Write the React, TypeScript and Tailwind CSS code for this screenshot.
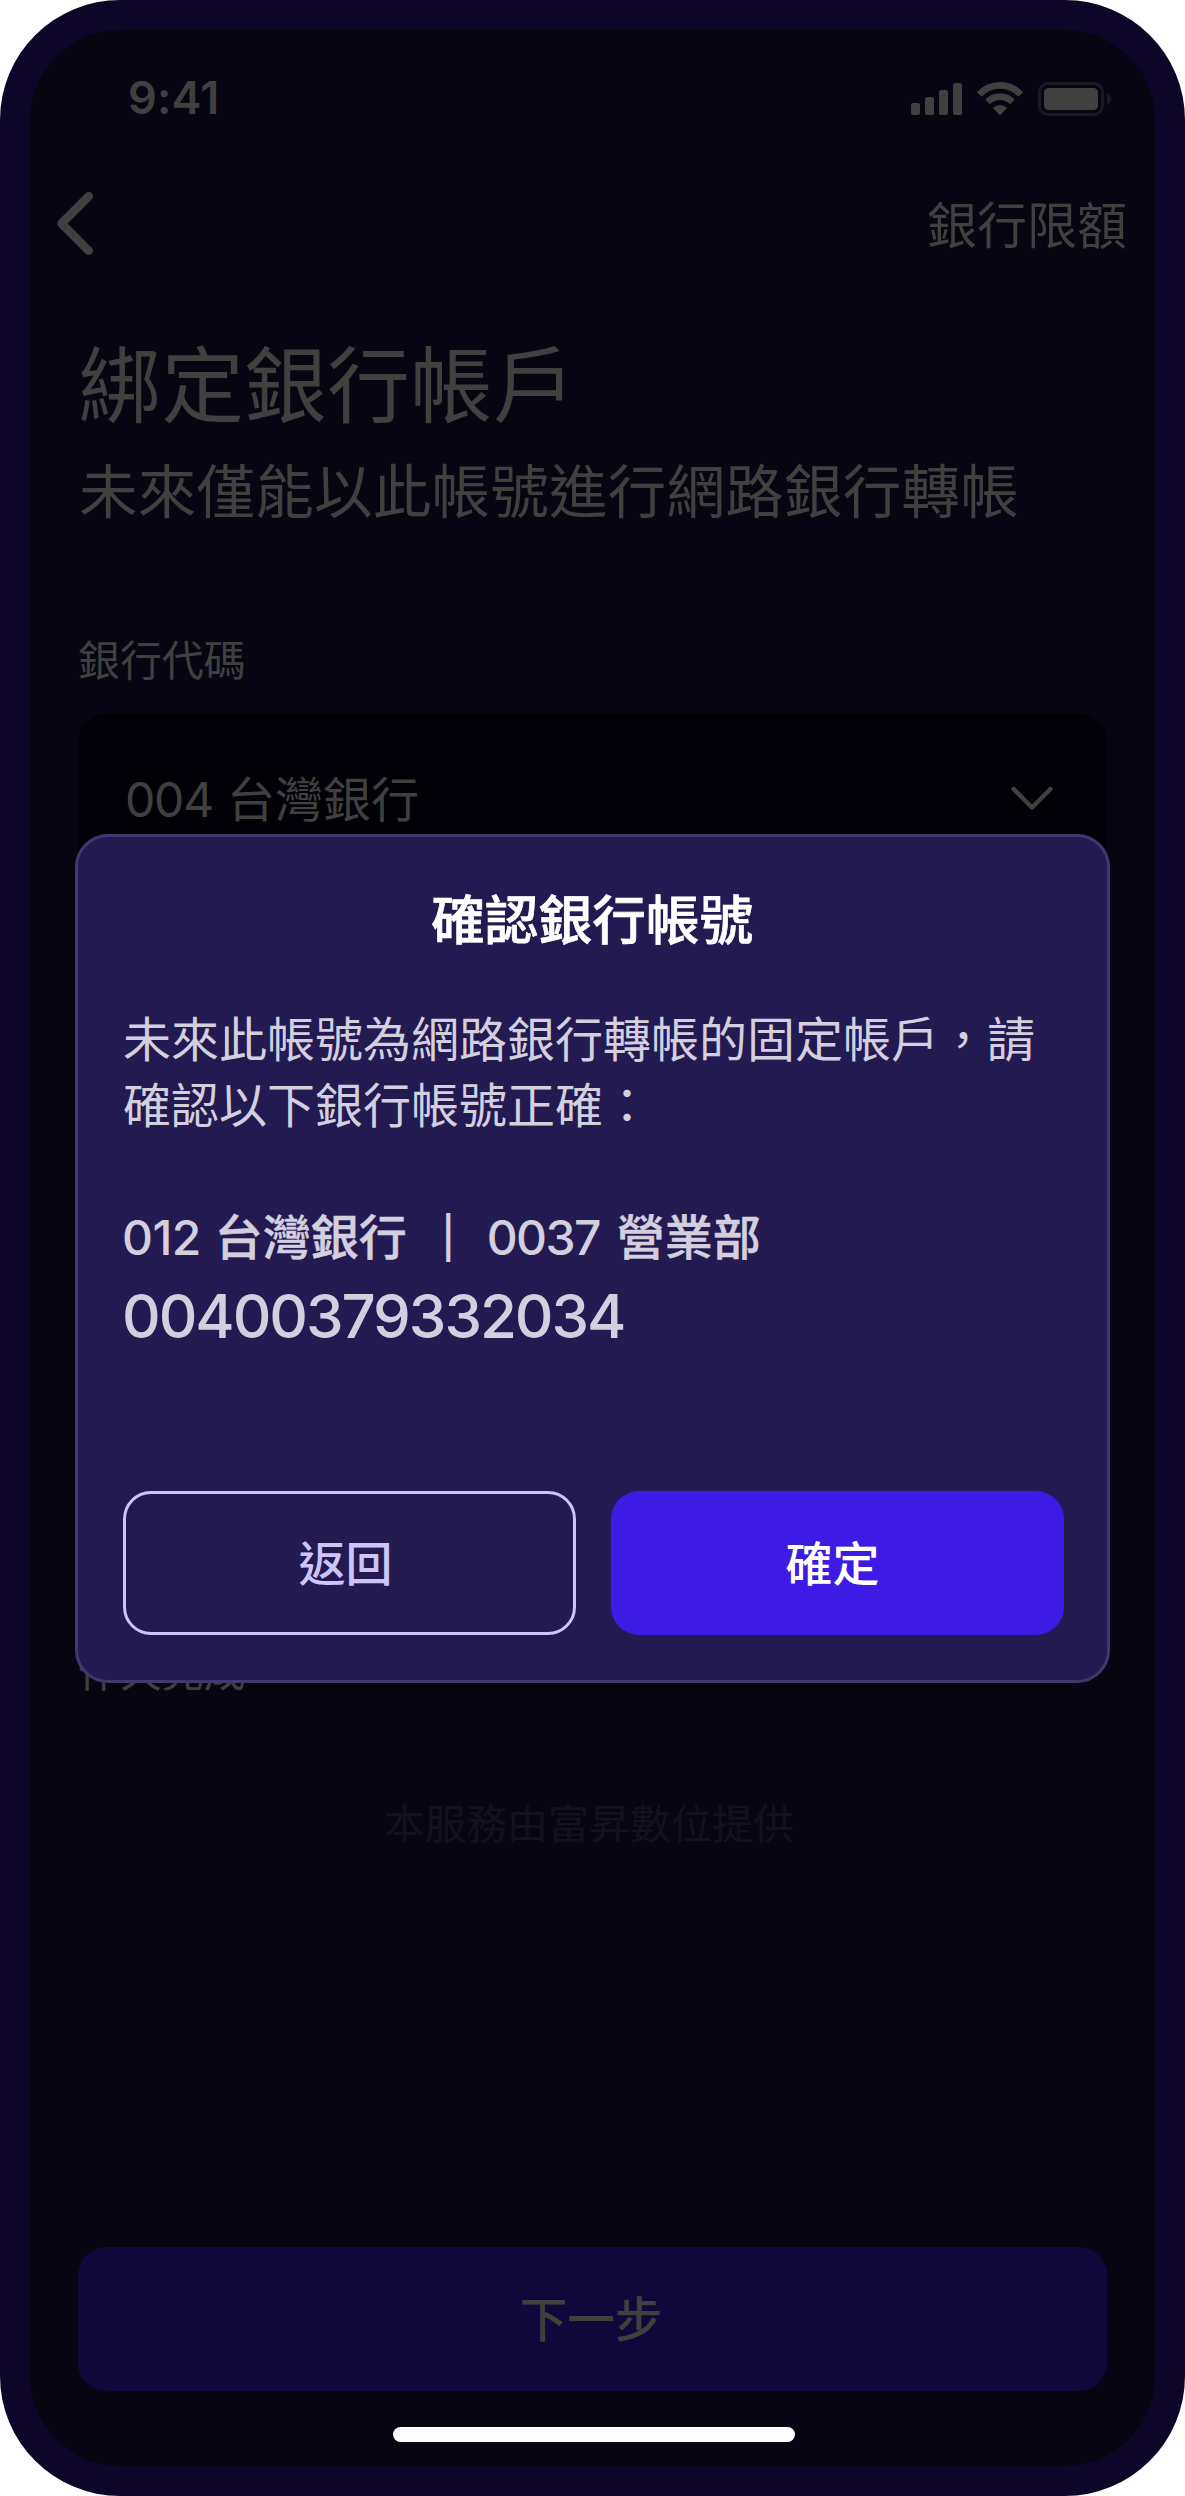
const cjk = "font-['Noto_Sans_CJK_TC',sans-serif]";
const latin = "font-['Inter','Noto_Sans_CJK_TC',sans-serif]";

function StatusIcons() {
  return (
    <svg className="h-9 w-[200px]" viewBox="911 80 200 36" fill="none" aria-hidden="true">
      <g fill="#40403f">
        <rect x="911" y="103" width="9" height="12" rx="2.6" />
        <rect x="925" y="97" width="9" height="18" rx="2.6" />
        <rect x="939" y="90" width="9" height="25" rx="2.6" />
        <rect x="953" y="83" width="9" height="32" rx="2.6" />
        <path d="M992.8 107.9Q1000 102 1007.2 107.9L1000 115.2Z" />
        <rect x="1044" y="88" width="54" height="22" rx="4.5" />
      </g>
      <g stroke="#40403f" strokeWidth="6.7">
        <path d="M979.3 94.4A28.2 28.2 0 0 1 1020.7 94.4" />
        <path d="M987.6 101.9A17 17 0 0 1 1012.4 101.9" />
      </g>
      <rect x="1039.5" y="83.5" width="63" height="31" rx="8.5" stroke="#1a1820" strokeWidth="3" />
      <path d="M1107 93C1112.3 95 1112.3 103 1107 105Z" fill="#1a1820" />
    </svg>
  );
}

function ConfirmDialog() {
  return (
    <div
      role="dialog"
      className="absolute top-[804px] left-[45px] flex h-[849px] w-[1035px] flex-col rounded-[33px] border-[3px] border-[#43376d] bg-[#231a51] pt-11 pr-[43.5px] pl-[45px] text-[#d3cfdf]"
    >
      <h2
        className={`${cjk} pr-0.5 text-center text-[53.7px] leading-[72px] font-medium text-white [-webkit-text-stroke:0.7px_white]`}
      >
        確認銀行帳號
      </h2>
      <p className={`${cjk} mt-[50px] w-[930px] text-[48px] leading-[66px]`}>
        未來此帳號為網路銀行轉帳的固定帳戶，請確認以下銀行帳號正確：
      </p>
      <div className={`${latin} mt-[73px] flex text-[48px] leading-[60px] font-medium whitespace-nowrap`}>
        <span className="-ml-px tracking-[-0.6px]">012</span>
        <span className="ml-[14px] [-webkit-text-stroke:0.5px_#d3cfdf]">台灣銀行</span>
        <span className="ml-[18px] text-[47px] [-webkit-text-stroke:2px_#d3cfdf]">｜</span>
        <span className="ml-[15px] tracking-[-1.6px]">0037</span>
        <span className="ml-[17px] [-webkit-text-stroke:0.5px_#d3cfdf]">營業部</span>
      </div>
      <div className={`${latin} mt-3 -ml-px text-[60px] leading-[72px] font-medium tracking-[-2.07px]`}>
        00400379332034
      </div>
      <div className={`${cjk} mt-[139px] flex justify-between text-[47px] font-medium`}>
        <button className="flex h-36 w-[453px] items-center justify-center rounded-[28px] border-[3px] border-[#cdc4f8] pr-2 pb-1 leading-[64px] text-[#cdc4f8]">
          返回
        </button>
        <button className="flex h-36 w-[453px] items-center justify-center rounded-[28px] bg-[#3d1be4] pr-[9px] pb-1 leading-[64px] text-white">
          確定
        </button>
      </div>
    </div>
  );
}

export default function App() {
  return (
    <div className="h-[2496px] w-[1185px] bg-white">
      <div className="relative flex h-full w-full flex-col rounded-[120px] bg-[#0d0629] p-[30px]">
        <main
          className={`${cjk} relative flex flex-1 flex-col rounded-[90px] bg-[#080512] text-[#40403f]`}
        >
          <div className="mt-[50px] flex h-9 items-center justify-between pr-[44px] pl-[98px]">
            <span className="font-['Inter',sans-serif] text-[45px] leading-9 font-semibold tracking-[0.2px]">
              9:41
            </span>
            <StatusIcons />
          </div>

          <header className="mt-[76px] flex h-[63px] items-center justify-between pr-7 pl-[27px]">
            <svg className="h-[63px] w-9" viewBox="57 192 36 63" fill="none" aria-hidden="true">
              <path
                d="M88.7 196.3L61.5 223.5L88.7 250.7"
                stroke="#40403f"
                strokeWidth="8.6"
                strokeLinecap="round"
                strokeLinejoin="round"
              />
            </svg>
            <span className="pb-[3px] text-[50px] leading-[60px]">銀行限額</span>
          </header>

          <h1 className="mt-[77px] ml-[48.5px] text-[82.5px] leading-[96px] tracking-[0.4px]">綁定銀行帳戶</h1>
          <p className="mt-6 ml-[49px] text-[58.5px] leading-[72px] tracking-[0.25px] whitespace-nowrap">
            未來僅能以此帳號進行網路銀行轉帳
          </p>

          <label className="mt-[109.5px] ml-12 text-[41.9px] leading-[48px]">銀行代碼</label>
          <div className="mt-[32.5px] mr-12 ml-12 flex h-[168px] items-center justify-between rounded-[28px] bg-[#020108] pr-[54px] pl-[47px]">
            <div className={`${latin} flex pt-1 text-[48px] leading-[60px]`}>
              <span className="tracking-[-1.2px]">004</span>
              <span className="ml-[14px]">台灣銀行</span>
            </div>
            <svg className="h-6 w-[42px]" viewBox="0 0 42 24" fill="none" aria-hidden="true">
              <path
                d="M2.6 3L21 21.5L39.4 3"
                stroke="#40403f"
                strokeWidth="4.5"
                strokeLinecap="round"
                strokeLinejoin="round"
              />
            </svg>
          </div>

          <p className="mt-[763px] ml-12 text-[41.9px] leading-[48px]">作天完成</p>
          <p className="mt-[104px] pr-[7px] text-center text-[41px] leading-[48px] text-[#13111b]">
            本服務由富昇數位提供
          </p>

          <button className="mt-[402px] mr-12 ml-12 flex h-36 items-center justify-center rounded-[28px] bg-[#10073a] pr-[3px] pb-[4px] text-[47.5px] leading-[64px] font-medium">
            下一步
          </button>
          <div className="mt-9 ml-[363px] h-[15px] w-[402px] rounded-full bg-white" />

          <ConfirmDialog />
        </main>
      </div>
    </div>
  );
}
